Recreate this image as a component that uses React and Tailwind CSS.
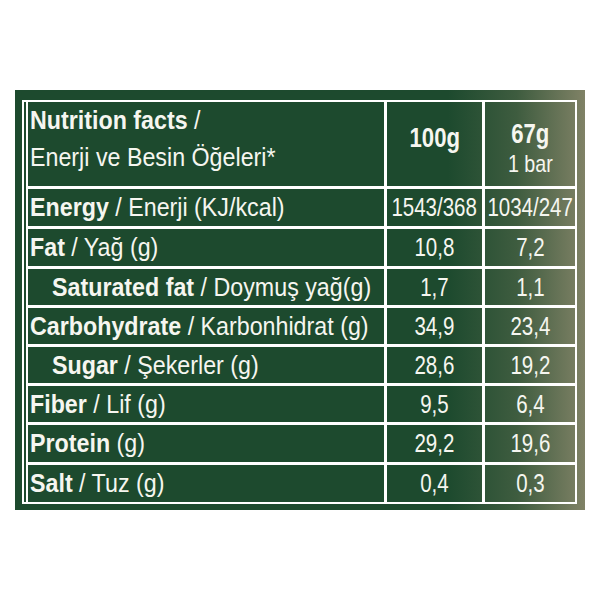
const rows = [
  { bold: 'Energy', rest: ' / Enerji (KJ/kcal)', a: '1543/368', b: '1034/247' },
  { bold: 'Fat', rest: ' / Yağ (g)', a: '10,8', b: '7,2' },
  { bold: 'Saturated fat', rest: ' / Doymuş yağ(g)', a: '1,7', b: '1,1', indent: true },
  { bold: 'Carbohydrate', rest: ' / Karbonhidrat (g)', a: '34,9', b: '23,4' },
  { bold: 'Sugar', rest: ' / Şekerler (g)', a: '28,6', b: '19,2', indent: true },
  { bold: 'Fiber', rest: ' / Lif (g)', a: '9,5', b: '6,4' },
  { bold: 'Protein', rest: ' (g)', a: '29,2', b: '19,6' },
  { bold: 'Salt', rest: ' / Tuz (g)', a: '0,4', b: '0,3', last: true },
];

const font = "font-['Liberation_Sans',Arial,sans-serif]";

export default function App() {
  return (
    <div className={`w-[600px] h-[600px] bg-white pt-[90px] pl-[15px] ${font}`}>
      <div className="w-[570px] h-[420px] pt-[10px] pl-[7px] bg-[linear-gradient(to_right,#1d4a2e_0%,#1d4a2e_76%,#3e5c3f_88%,#808266_100%)] text-[#f6f6f0]">
        <div className="w-[555px] h-[404px] border-2 border-white pl-[2px]">
          <div className="grid grid-cols-[359px_98px_90px] grid-rows-[87px_40px_40px_39px_39px_39px_39px_40px_37px] border-l-2 border-white">
            {/* header */}
            <div className="border-r-[3px] border-b-[3px] border-white pl-[2px] text-[25px] leading-[37px] whitespace-nowrap">
              <div className="origin-left scale-x-[0.93]">
                <span className="font-bold">Nutrition facts</span> /
              </div>
              <div className="origin-left scale-x-[0.93]">Enerji ve Besin Öğeleri*</div>
            </div>
            <div className="border-r-[3px] border-b-[3px] border-white flex items-center justify-center pb-[12px]">
              <span className="font-bold text-[27px] leading-none scale-x-[0.82]">100g</span>
            </div>
            <div className="border-b-[3px] border-white flex flex-col items-center justify-center pt-[10px]">
              <span className="font-bold text-[27px] leading-[30px] scale-x-[0.82]">67g</span>
              <span className="text-[24px] leading-[30px] scale-x-[0.82]">1 bar</span>
            </div>

            {rows.map((r) => (
              <Row key={r.bold} {...r} />
            ))}
          </div>
        </div>
      </div>
    </div>
  );
}

function Row({ bold, rest, a, b, indent, last }) {
  const bb = last ? '' : 'border-b-[3px]';
  return (
    <>
      <div
        className={`${bb} border-r-[3px] border-white flex items-center whitespace-nowrap text-[25px] leading-none ${
          indent ? 'pl-[24px]' : 'pl-[2px]'
        }`}
      >
        <div className="origin-left scale-x-[0.93]">
          <span className="font-bold">{bold}</span>
          <span className="whitespace-pre">{rest}</span>
        </div>
      </div>
      <div className={`${bb} border-r-[3px] border-white flex items-center justify-center text-[25px] leading-none`}>
        <span className="scale-x-[0.82] whitespace-nowrap">{a}</span>
      </div>
      <div className={`${bb} border-white flex items-center justify-center text-[25px] leading-none`}>
        <span className="scale-x-[0.82] whitespace-nowrap">{b}</span>
      </div>
    </>
  );
}
